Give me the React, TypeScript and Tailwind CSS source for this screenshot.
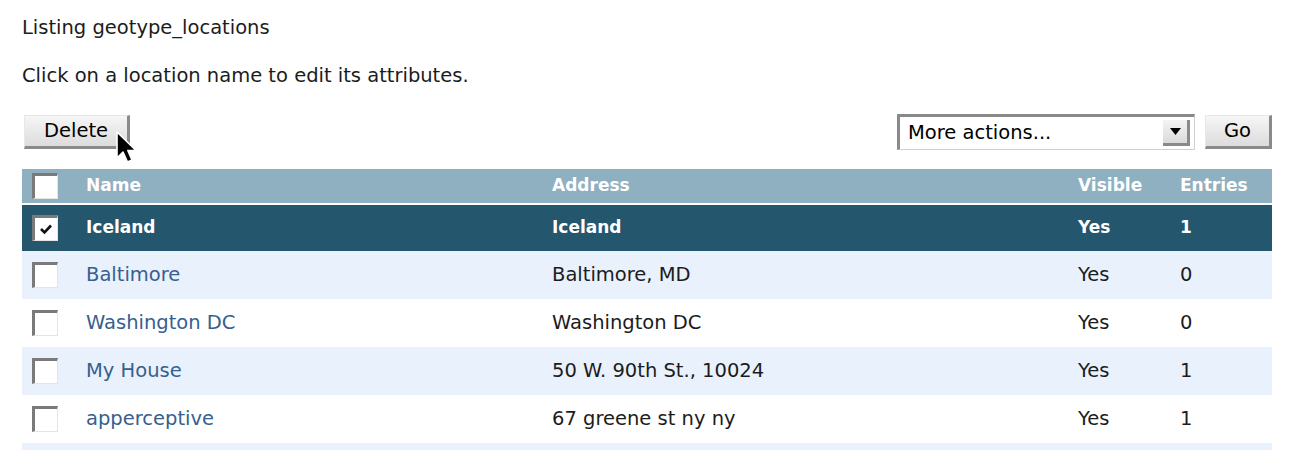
import { Fragment } from 'react'

interface Location {
  name: string
  address: string
  visible: string
  entries: number
  checked?: boolean
}

const locations: Location[] = [
  { name: 'Iceland', address: 'Iceland', visible: 'Yes', entries: 1, checked: true },
  { name: 'Baltimore', address: 'Baltimore, MD', visible: 'Yes', entries: 0 },
  { name: 'Washington DC', address: 'Washington DC', visible: 'Yes', entries: 0 },
  { name: 'My House', address: '50 W. 90th St., 10024', visible: 'Yes', entries: 1 },
  { name: 'apperceptive', address: '67 greene st ny ny', visible: 'Yes', entries: 1 },
]

function Checkbox({ checked }: { checked?: boolean }) {
  return (
    <div className="w-[26px] h-[26px] bg-white border-t-[3px] border-l-[3px] border-t-[#7a7a7a] border-l-[#7a7a7a] border-r border-b border-r-[#e4e4e4] border-b-[#e4e4e4] flex items-center justify-center">
      {checked && (
        <svg width="14" height="12" viewBox="0 0 14 12">
          <path d="M2 6 L5.5 9.5 L12 2.5" stroke="#111" strokeWidth="2.6" fill="none" />
        </svg>
      )}
    </div>
  )
}

function Cursor() {
  return (
    <svg className="absolute left-[115px] top-[130px]" width="26" height="38" viewBox="0 0 26 38">
      <path d="M2 2 L2 28 L8 22 L12.5 32 L17 30 L12.8 20.5 L21 20.5 Z" fill="#000" stroke="#fff" strokeWidth="1.6" strokeLinejoin="round" />
    </svg>
  )
}

export default function App() {
  return (
    <div className="relative w-[1292px] h-[450px] bg-white overflow-hidden font-['DejaVu_Sans',sans-serif] text-[19.5px] text-[#1c1c1c]">
      <div className="pl-[22px] pr-[20px] pt-[17px]">
        <p className="leading-[22px]">Listing geotype_locations</p>
        <p className="leading-[22px] mt-[26px]">Click on a location name to edit its attributes.</p>

        <div className="flex items-center justify-between mt-[26px] h-[38px]">
          <button className="ml-[2px] w-[106px] h-[34px] bg-gradient-to-b from-[#f6f6f6] to-[#dcdcdc] border-r-[3px] border-b-[3px] border-r-[#8a8a8a] border-b-[#8a8a8a] border-t border-l border-t-[#e8e8e8] border-l-[#e8e8e8] text-black">
            Delete
          </button>
          <div className="flex items-center gap-[10px]">
            <div className="w-[298px] h-[36px] bg-white border-t-[3px] border-l-[3px] border-t-[#8a8a8a] border-l-[#8a8a8a] border-r border-b border-r-[#d0d0d0] border-b-[#d0d0d0] flex items-center justify-between pl-[8px] pr-[4px]">
              <span className="text-black">More actions...</span>
              <div className="w-[27px] h-[26px] bg-gradient-to-b from-[#f4f4f4] to-[#dadada] border-r-[3px] border-b-[3px] border-r-[#8a8a8a] border-b-[#8a8a8a] flex items-center justify-center">
                <svg width="11" height="7" viewBox="0 0 11 7">
                  <path d="M0 0 L11 0 L5.5 7 Z" fill="#000" />
                </svg>
              </div>
            </div>
            <button className="w-[67px] h-[34px] bg-gradient-to-b from-[#f6f6f6] to-[#dcdcdc] border-r-[3px] border-b-[3px] border-r-[#8a8a8a] border-b-[#8a8a8a] border-t border-l border-t-[#e8e8e8] border-l-[#e8e8e8] text-black">
              Go
            </button>
          </div>
        </div>

        <div className="mt-[18px] w-[1250px]">
          <div className="grid grid-cols-[64px_466px_526px_102px_92px] items-center h-[34px] bg-[#8fb0c1] text-white font-bold text-[17px]">
            <div className="pl-[10px]"><Checkbox /></div>
            <div>Name</div>
            <div>Address</div>
            <div>Visible</div>
            <div>Entries</div>
          </div>
          {locations.map((loc, i) => (
            <Fragment key={loc.name}>
              <div
                className={`grid grid-cols-[64px_466px_526px_102px_92px] items-center ${
                  loc.checked
                    ? 'h-[46px] mt-[2px] bg-[#24566e] text-white font-bold text-[17px]'
                    : i % 2 === 1
                      ? 'h-[48px] bg-[#e9f1fc]'
                      : 'h-[48px] bg-white'
                }`}
              >
                <div className="pl-[10px]"><Checkbox checked={loc.checked} /></div>
                <div className={loc.checked ? '' : 'text-[#36608e]'}>{loc.name}</div>
                <div>{loc.address}</div>
                <div>{loc.visible}</div>
                <div>{loc.entries}</div>
              </div>
            </Fragment>
          ))}
          <div className="h-[48px] bg-[#e9f1fc]" />
        </div>
      </div>
      <Cursor />
    </div>
  )
}
